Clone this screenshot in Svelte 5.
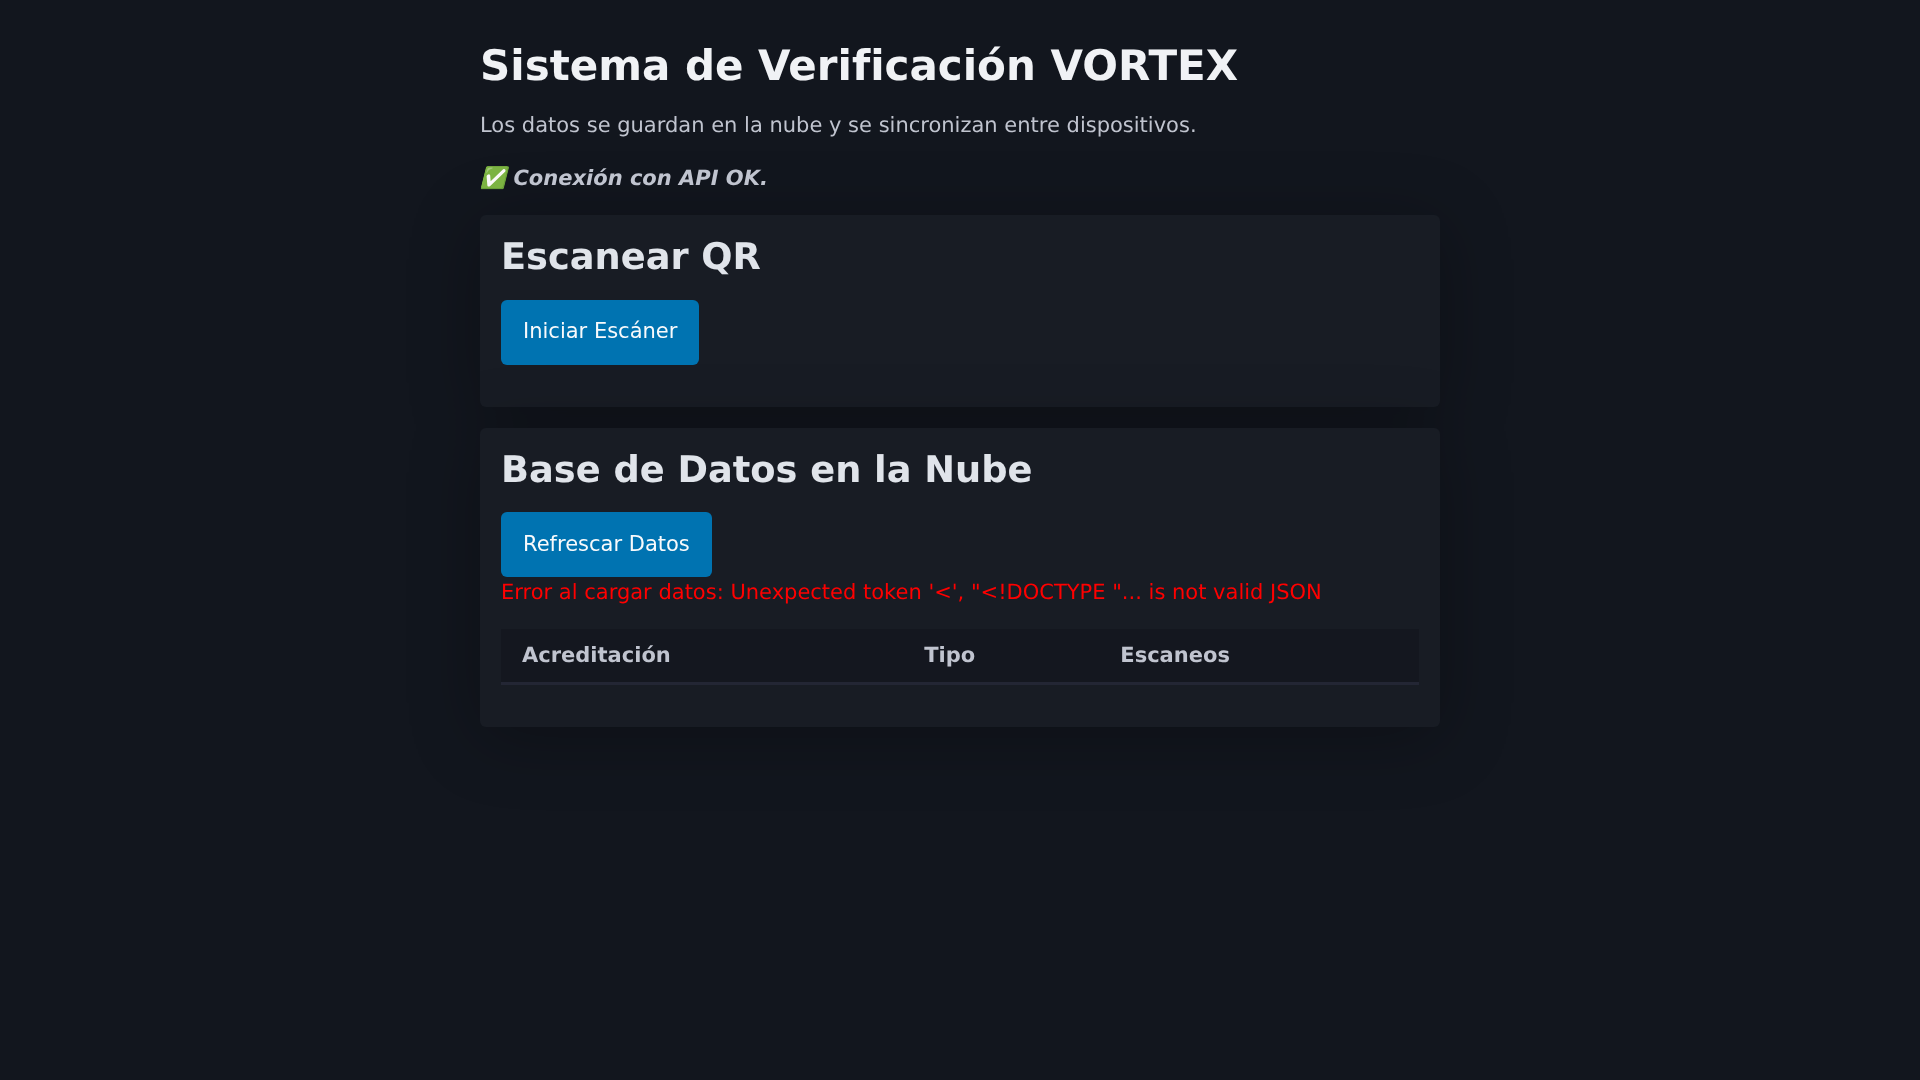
<script>
  const columns = ['Acreditación', 'Tipo', 'Escaneos'];
</script>

<div class="page">
  <h1>Sistema de Verificación VORTEX</h1>
  <p class="lead">Los datos se guardan en la nube y se sincronizan entre dispositivos.</p>
  <p class="status">✅ Conexión con API OK.</p>

  <section class="card">
    <h2>Escanear QR</h2>
    <button>Iniciar Escáner</button>
    <div class="reader"></div>
  </section>

  <section class="card">
    <h2>Base de Datos en la Nube</h2>
    <button>Refrescar Datos</button>
    <p class="error">Error al cargar datos: Unexpected token '&lt;', "&lt;!DOCTYPE "... is not valid JSON</p>
    <table>
      <thead>
        <tr>
          {#each columns as c}<th>{c}</th>{/each}
        </tr>
      </thead>
      <tbody></tbody>
    </table>
  </section>
</div>

<style>
  :global(body) {
    margin: 0;
    background: #12161e;
    color: #c0c4cf;
    font-family: "DejaVu Sans", sans-serif;
    font-size: 21px;
    line-height: 1.5;
    min-height: 1080px;
    font-variant-ligatures: none;
    text-rendering: geometricPrecision;
  }
  .page {
    width: 960px;
    margin: 0 auto;
    padding-top: 41px;
    will-change: opacity;
  }
  h1 {
    margin: 0 0 18.4px;
    font-size: 42px;
    line-height: 1.2;
    color: #f0f2f5;
  }
  .lead {
    margin: 0 0 21.5px;
  }
  .status {
    margin: 0 0 21.2px;
    font-weight: bold;
    font-style: italic;
  }
  .card {
    margin-bottom: 20.5px;
    padding: 21px;
    background: #181c24;
    border-radius: 6px;
    box-shadow: 0 10px 70px rgba(0, 0, 0, 0.28);
  }
  h2 {
    margin: 0 0 21px;
    font-size: 36.75px;
    line-height: 42.1px;
    color: #e0e4ea;
  }
  button {
    display: block;
    padding: 19.85px 22px 20.15px;
    border: 0;
    border-radius: 6px;
    background: #0073b1;
    color: #f8fafc;
    font-family: inherit;
    font-size: 21px;
    line-height: 25px;
  }
  .reader {
    height: 21.7px;
  }
  .error {
    margin: 0;
    color: #f00;
  }
  table {
    width: 100%;
    margin: 21px 0;
    border-collapse: collapse;
  }
  th {
    padding: 10.5px 21px;
    text-align: left;
    background: #14171f;
    border-bottom: 3px solid #232634;
  }
</style>
